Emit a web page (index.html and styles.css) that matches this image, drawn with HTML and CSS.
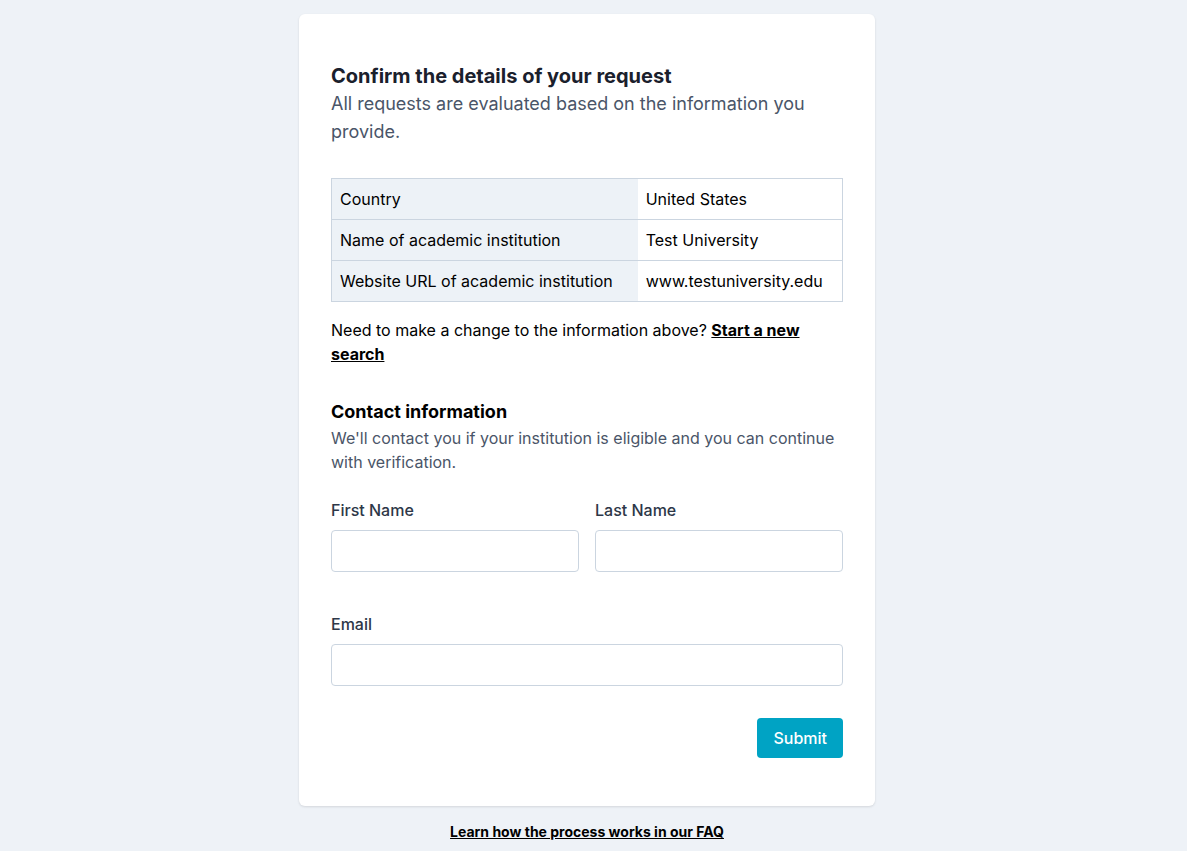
FILE: index.html
```html
<!DOCTYPE html>
<html lang="en">
<head>
<meta charset="utf-8">
<title>Confirm request</title>
<link rel="stylesheet" href="styles.css">
</head>
<body>
<main class="page">
  <section class="card">
    <h1 class="title">Confirm the details of your request</h1>
    <p class="lead">All requests are evaluated based on the information you provide.</p>
    <table class="details">
      <tr><th>Country</th><td>United States</td></tr>
      <tr><th>Name of academic institution</th><td>Test University</td></tr>
      <tr><th>Website URL of academic institution</th><td>www.testuniversity.edu</td></tr>
    </table>
    <p class="change">Need to make a change to the information above? <a href="#" class="strong-link">Start a new search</a></p>
    <h2 class="subtitle">Contact information</h2>
    <p class="note">We'll contact you if your institution is eligible and you can continue with verification.</p>
    <form class="form">
      <div class="row">
        <label class="field"><span class="label">First Name</span><input class="input" type="text"></label>
        <label class="field"><span class="label">Last Name</span><input class="input" type="text"></label>
      </div>
      <label class="field email"><span class="label">Email</span><input class="input" type="email"></label>
      <div class="actions"><button type="button" class="btn">Submit</button></div>
    </form>
  </section>
  <a href="#" class="faq">Learn how the process works in our FAQ</a>
</main>
</body>
</html>
```
FILE: styles.css
```css
* { box-sizing: border-box; }
html, body { margin: 0; padding: 0; }
body {
  background: #eef2f7;
  font-family: Inter, "Noto Sans", sans-serif;
  color: #000;
}
.page {
  display: flex;
  flex-direction: column;
  align-items: center;
  padding: 14px 13px 0 0;
}
.card {
  width: 576px;
  background: #fff;
  border-radius: 6px;
  box-shadow: 0 1px 3px rgba(0,0,0,0.08), 0 1px 2px rgba(0,0,0,0.04);
  padding: 48px 32px;
}
.title {
  margin: 0;
  font-size: 20px;
  line-height: 28px;
  font-weight: 700;
  color: #1a202c;
}
.lead {
  margin: 0;
  font-size: 18px;
  line-height: 28px;
  color: #4a5568;
}
.details {
  width: 100%;
  margin-top: 32px;
  border-collapse: collapse;
  border: 1px solid #cbd5e0;
  font-size: 16px;
  line-height: 24px;
}
.details th, .details td {
  text-align: left;
  font-weight: 400;
  padding: 8px;
  border-top: 1px solid #cbd5e0;
}
.details th { background: #edf2f7; }
.change {
  margin: 16px 0 0;
  font-size: 16px;
  line-height: 24px;
}
.strong-link {
  color: #000;
  font-weight: 700;
  text-decoration: underline;
}
.subtitle {
  margin: 32px 0 0;
  font-size: 18px;
  line-height: 28px;
  font-weight: 700;
  color: #000;
}
.note {
  margin: 0;
  font-size: 16px;
  line-height: 24px;
  color: #4a5568;
}
.form { margin-top: 24px; }
.row {
  display: grid;
  grid-template-columns: 1fr 1fr;
  gap: 16px;
}
.field {
  display: flex;
  flex-direction: column;
  gap: 8px;
}
.email { margin-top: 40px; }
.label {
  font-size: 16px;
  line-height: 24px;
  font-weight: 500;
  color: #2d3748;
}
.input {
  height: 42px;
  width: 100%;
  border: 1px solid #cbd5e0;
  border-radius: 4px;
  background: #fff;
  font: inherit;
  padding: 0 12px;
}
.actions {
  display: flex;
  justify-content: flex-end;
  margin-top: 32px;
}
.btn {
  height: 40px;
  padding: 0 16px;
  background: #00a3c4;
  color: #fff;
  border: none;
  border-radius: 4px;
  font-family: inherit;
  font-size: 16px;
  font-weight: 500;
}
.faq {
  margin-top: 16px;
  font-size: 14px;
  line-height: 20px;
  font-weight: 700;
  color: #000;
  text-decoration: underline;
}
```
